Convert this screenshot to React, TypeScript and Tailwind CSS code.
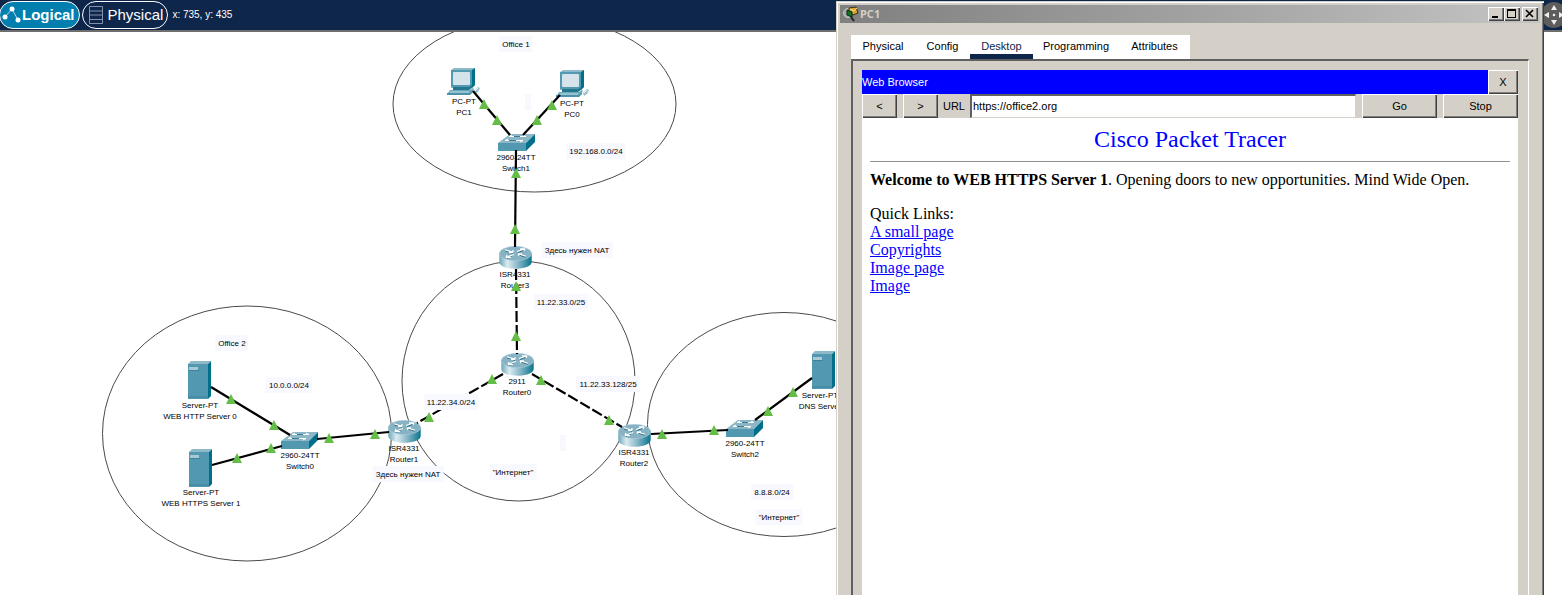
import React from "react";

type Point = { x: number; y: number };
type DeviceKind = "pc" | "switch" | "router" | "server";
type Device = Point & { kind: DeviceKind; model: string; name: string; labelX: number; labelY: number };
type Note = Point & { text: string };
type Cable = { from: Point; to: Point; dashed?: boolean };

/** Workspace coordinates start at the top of the page, above the toolbar. */
const TOOLBAR_HEIGHT = 32;

const areas = [
  { cx: 534.5, cy: 104, rx: 141.5, ry: 88 },
  { cx: 247, cy: 433.5, rx: 144.5, ry: 127.5 },
  { cx: 518.5, cy: 381, rx: 116.5, ry: 120 },
  { cx: 784, cy: 424.5, rx: 136.5, ry: 112 },
];

const devices: Device[] = [
  { kind: "pc", x: 447, y: 68, model: "PC-PT", name: "PC1", labelX: 464, labelY: 96 },
  { kind: "pc", x: 556, y: 70, model: "PC-PT", name: "PC0", labelX: 572, labelY: 98 },
  { kind: "switch", x: 498, y: 134, model: "2960-24TT", name: "Switch1", labelX: 516, labelY: 152 },
  { kind: "router", x: 499, y: 246, model: "ISR4331", name: "Router3", labelX: 515, labelY: 269 },
  { kind: "router", x: 501, y: 353, model: "2911", name: "Router0", labelX: 517, labelY: 376 },
  { kind: "router", x: 388, y: 420, model: "ISR4331", name: "Router1", labelX: 404, labelY: 443 },
  { kind: "router", x: 618, y: 424, model: "ISR4331", name: "Router2", labelX: 634, labelY: 447 },
  { kind: "switch", x: 281, y: 432, model: "2960-24TT", name: "Switch0", labelX: 300, labelY: 450 },
  { kind: "server", x: 188, y: 361, model: "Server-PT", name: "WEB HTTP Server 0", labelX: 200, labelY: 400 },
  { kind: "server", x: 189, y: 449, model: "Server-PT", name: "WEB HTTPS Server 1", labelX: 201, labelY: 487 },
  { kind: "switch", x: 726, y: 420, model: "2960-24TT", name: "Switch2", labelX: 745, labelY: 438 },
  { kind: "server", x: 812, y: 351, model: "Server-PT", name: "DNS Server", labelX: 820, labelY: 390 },
];

const cables: Cable[] = [
  { from: { x: 473, y: 91 }, to: { x: 510, y: 135 } },
  { from: { x: 560, y: 95 }, to: { x: 523, y: 135 } },
  { from: { x: 516, y: 150 }, to: { x: 515, y: 247 } },
  { from: { x: 516, y: 269 }, to: { x: 517, y: 354 }, dashed: true },
  { from: { x: 503, y: 374 }, to: { x: 417, y: 423 }, dashed: true },
  { from: { x: 532, y: 374 }, to: { x: 622, y: 427 }, dashed: true },
  { from: { x: 211, y: 387 }, to: { x: 290, y: 435 } },
  { from: { x: 212, y: 465 }, to: { x: 282, y: 446 } },
  { from: { x: 317, y: 439 }, to: { x: 389, y: 432 } },
  { from: { x: 651, y: 434 }, to: { x: 728, y: 430 } },
  { from: { x: 755, y: 420 }, to: { x: 812, y: 378 } },
];

const linkLights: Point[] = [
  { x: 484, y: 104 }, { x: 497, y: 120 }, { x: 552, y: 105 }, { x: 537, y: 120 },
  { x: 516, y: 173 }, { x: 515, y: 229 }, { x: 516, y: 286 }, { x: 516, y: 336 },
  { x: 492, y: 379 }, { x: 541, y: 380 }, { x: 429, y: 417 }, { x: 609, y: 420 },
  { x: 375, y: 434 }, { x: 662, y: 434 }, { x: 231, y: 399 }, { x: 274, y: 425 },
  { x: 237, y: 458 }, { x: 271, y: 448 }, { x: 329, y: 438 }, { x: 714, y: 430 },
  { x: 768, y: 411 }, { x: 793, y: 392 },
];

const notes: Note[] = [
  { text: "Office 1", x: 516, y: 44 },
  { text: "", x: 528, y: 102 },
  { text: "192.168.0.0/24", x: 596, y: 151 },
  { text: "Здесь нужен NAT", x: 577, y: 250 },
  { text: "11.22.33.0/25", x: 561, y: 302 },
  { text: "11.22.33.128/25", x: 608, y: 384 },
  { text: "11.22.34.0/24", x: 451, y: 402 },
  { text: "10.0.0.0/24", x: 289, y: 385 },
  { text: "Office 2", x: 232, y: 343 },
  { text: "Здесь нужен NAT", x: 408, y: 474 },
  { text: "\"Интернет\"", x: 513, y: 472 },
  { text: "", x: 563, y: 443 },
  { text: "8.8.8.0/24", x: 772, y: 492 },
  { text: "\"Интернет\"", x: 779, y: 517 },
];

function PcIcon() {
  return (
    <g>
      <path d="M4 2 L7 0 H28 V17 L25 20 H4Z" fill="#8db9c9" />
      <path d="M25 2 L28 0 V17 L25 20Z" fill="#00708a" />
      <rect x="4" y="2" width="21" height="17" fill="#529ab1" />
      <rect x="6" y="4" width="17" height="13" rx="1" fill="#d5e4ea" />
      <path d="M6 19 H22 L25 17 V20 L22 22 H6Z" fill="#22768e" />
      <path d="M3 22 H23 L26 20 L27 21 L24 25 H1Z" fill="#6aa9bd" />
      <path d="M0 25 H23 L26 22 V24 L23 27 H0Z" fill="#4a91a9" />
      <path d="M3 24 H22" stroke="#c3dbe3" strokeWidth="1" />
      <path d="M27 23 L31 19 L33 20 L31 24 L28 26Z" fill="#9bbfcb" />
      <path d="M28 23 L31 20" stroke="#e8f2f5" strokeWidth="1" />
    </g>
  );
}

function SwitchIcon() {
  return (
    <g>
      <path d="M0 9 L12 0 H37 L28 9Z" fill="#8db7c7" />
      <path d="M0 9 H28 V17 H0Z" fill="#5298b0" />
      <path d="M28 9 L37 0 V8 L28 17Z" fill="#00708a" />
      <g fill="none" strokeWidth="1">
        <path d="M16 2.500 H22 M10 6.500 H18" stroke="#3b7d94" />
        <path d="M11 2.500 H16 M11 2.500 L14 1 M22 2.500 H28 M25 1 L28 2.500 M7 6.500 H11 M7 6.500 L10 5 M18 6.500 H25 M22 8 L25 6.500" stroke="#fff" />
      </g>
    </g>
  );
}

function RouterIcon() {
  return (
    <g>
      <path d="M.3 7 V16 C.3 25 32.7 25 32.7 16 V7Z" fill="url(#router-side)" />
      <ellipse cx="16.500" cy="7.500" rx="16.200" ry="7.200" fill="#86b2c4" stroke="#b4d2dc" strokeWidth=".5" />
      <g fill="none" stroke="#286a80" strokeWidth="1">
        <path d="M6 4.800 L14 7.300 M27 11.200 L19 8.700 M19 6.500 L26 3.800 M14 9.300 L8 12.300" />
      </g>
      <g fill="none" stroke="#fff" strokeWidth="1.200">
        <path d="M6 3.800 L14 6.300 M14 6.300 V4 M14 6.300 H10" />
        <path d="M27 10.200 L19 7.800 M19 7.800 H23 M19 7.800 L20 10" />
        <path d="M18 5.500 L26 2.800 M26 2.800 H21 M26 2.800 L25 5" />
        <path d="M15 8.500 L7 11.500 M7 11.500 L8 9 M7 11.500 H12" />
      </g>
    </g>
  );
}

function ServerIcon() {
  return (
    <g>
      <path d="M0 3 L3 0 H23 L20 3Z" fill="#8db9c9" />
      <path d="M0 3 H20 V38 H0Z" fill="#5298b0" />
      <path d="M20 3 L23 0 V35 L20 38Z" fill="#00708a" />
      <rect x="1" y="6" width="9" height="3" fill="#a9cad5" />
      <path d="M1 9.500 H11 M0 36 H20" stroke="#38849d" strokeWidth="1" />
    </g>
  );
}

const icons: Record<DeviceKind, () => React.JSX.Element> = {
  pc: PcIcon,
  switch: SwitchIcon,
  router: RouterIcon,
  server: ServerIcon,
};

function Workspace() {
  return (
    <main className="relative flex-1 overflow-hidden bg-white text-[8px] leading-[11px] text-black">
      <svg className="absolute inset-0 h-full w-full" aria-hidden="true">
        <g transform={`translate(0 ${-TOOLBAR_HEIGHT})`} fill="none" stroke="#4a4a4a" strokeWidth="1">
          {areas.map((area) => (
            <ellipse key={area.cx} {...area} />
          ))}
        </g>
      </svg>
      {devices.map((device) => (
        <div
          key={device.name}
          className="absolute -translate-x-1/2 text-center whitespace-nowrap"
          style={{ left: device.labelX, top: device.labelY - TOOLBAR_HEIGHT }}
        >
          <p>{device.model}</p>
          <p>{device.name}</p>
        </div>
      ))}
      <svg className="absolute inset-0 h-full w-full" aria-hidden="true">
        <defs>
          <linearGradient id="router-side">
            <stop offset="0" stopColor="#6aa6b9" />
            <stop offset=".25" stopColor="#dcebf0" />
            <stop offset=".55" stopColor="#8fbccb" />
            <stop offset="1" stopColor="#0a748d" />
          </linearGradient>
        </defs>
        <g transform={`translate(0 ${-TOOLBAR_HEIGHT})`}>
          {devices.map((device) => {
            const Icon = icons[device.kind];
            return (
              <g key={device.name} transform={`translate(${device.x} ${device.y})`}>
                <Icon />
              </g>
            );
          })}
          {cables.map(({ from, to, dashed }) => (
            <line
              key={`${from.x}-${to.x}`}
              x1={from.x}
              y1={from.y}
              x2={to.x}
              y2={to.y}
              stroke="#000"
              strokeWidth="2.200"
              strokeDasharray={dashed ? "11 3" : undefined}
            />
          ))}
        </g>
      </svg>
      {notes.map((note) => (
        <p
          key={`${note.x}-${note.y}`}
          className="absolute flex h-4 -translate-x-1/2 -translate-y-1/2 items-center bg-[#f8f8ff] px-[3px] whitespace-nowrap"
          style={{ left: note.x, top: note.y - TOOLBAR_HEIGHT }}
        >
          {note.text}
        </p>
      ))}
      <svg className="absolute inset-0 h-full w-full" aria-hidden="true">
        <g transform={`translate(0 ${-TOOLBAR_HEIGHT})`} fill="#64bd46">
          {linkLights.map(({ x, y }) => (
            <path key={`${x}-${y}`} d={`M${x} ${y - 5} L${x + 5} ${y + 5} H${x - 5}Z`} />
          ))}
        </g>
      </svg>
    </main>
  );
}

function Toolbar() {
  return (
    <header className="flex h-8 items-start overflow-hidden border-b-2 border-[#6e6e6e] bg-[#0f264b] text-white">
      <button className="-ml-px mt-px flex h-7 shrink-0 items-center gap-px rounded-full border border-white bg-[#027fae] pr-1 pl-[2px] text-[15px] font-bold">
        <svg width="19" height="20" viewBox="0 0 19 20" aria-hidden="true">
          <path d="M3 12 L10 4 L16 15" fill="none" stroke="#b5dbe9" strokeWidth="1" />
          <circle cx="3" cy="12" r="2.500" fill="#fff" />
          <circle cx="10" cy="4" r="2.500" fill="#fff" />
          <circle cx="16" cy="15" r="2.500" fill="#fff" />
        </svg>
        Logical
      </button>
      <button className="mt-px ml-[2px] flex h-7 shrink-0 items-center gap-1 rounded-full border border-white pr-1 pl-[5px] text-[15px]">
        <svg width="16" height="20" viewBox="0 0 16 20" aria-hidden="true">
          <path d="M1.500 1.500 H14.500 V18.500 H1.500Z M1.500 6 H14.500 M1.500 10 H14.500 M1.500 14.500 H14.500" fill="none" stroke="#8391ab" strokeWidth="1" />
        </svg>
        Physical
      </button>
      <p className="ml-1 text-[10px] leading-[30px] whitespace-nowrap">x: 735, y: 435</p>
      <button className="-mr-[5px] ml-auto mt-[2px] shrink-0" aria-label="Pan workspace">
        <svg width="26" height="26" viewBox="0 0 26 26" aria-hidden="true">
          <circle cx="13" cy="13" r="13" fill="#5d5d5d" />
          <path d="M13 3 L16 8 H10Z M13 23 L16 18 H10Z M3 13 L8 10 V16Z M23 13 L18 10 V16Z" fill="#eee" />
          <circle cx="13" cy="13" r="1.300" fill="#eee" />
        </svg>
      </button>
    </header>
  );
}

const raised =
  "bg-[#d4d0c8] shadow-[inset_1px_1px_#fff,inset_-1px_-1px_#404040,inset_-2px_-2px_#808080]";

const tabs = ["Physical", "Config", "Desktop", "Programming", "Attributes"];
const links = ["A small page", "Copyrights", "Image page", "Image"];

function TitleBar() {
  return (
    <div className="flex h-[18px] shrink-0 items-center bg-linear-to-r from-[#808080] to-[#c4c4c4] pr-[2px] pl-[3px]">
      <svg width="16" height="16" viewBox="0 0 16 16" aria-hidden="true">
        <circle cx="5" cy="7" r="4.500" fill="#a5aaa6" stroke="#c5c9c6" strokeWidth="1" />
        <path d="M8 11 L11 15" stroke="#222" strokeWidth="2" />
        <path d="M6 2 L13 1 L15 7 L10 9 L6 6Z" fill="#d9a634" stroke="#3b2d0c" strokeWidth="1" />
        <path d="M7 3 L11 5 L14 2" fill="none" stroke="#f7dc83" strokeWidth="1" />
        <path d="M4 4 L9 6 V11 L4 9Z" fill="#137026" stroke="#052d0d" strokeWidth="1" />
      </svg>
      <h1 className="ml-px pb-[2px] text-[11px] leading-none font-bold text-[#d4d0c8] [font-family:'Noto_Sans',sans-serif]">PC1</h1>
      <div className="ml-auto flex">
        <button className={`h-[14px] w-4 ${raised}`} aria-label="Minimize">
          <svg width="16" height="14" aria-hidden="true"><path d="M4 9 H10 V11 H4Z" /></svg>
        </button>
        <button className={`h-[14px] w-4 ${raised}`} aria-label="Maximize">
          <svg width="16" height="14" aria-hidden="true"><path d="M3 2 H12 V11 H3Z M4 4 V10 H11 V4Z" fillRule="evenodd" /></svg>
        </button>
        <button className={`ml-[2px] h-[14px] w-4 ${raised}`} aria-label="Close">
          <svg width="16" height="14" aria-hidden="true"><path d="M4 3 L11 10 M11 3 L4 10" stroke="#000" strokeWidth="1.600" /></svg>
        </button>
      </div>
    </div>
  );
}

function WebBrowser() {
  return (
    <section className="flex flex-1 flex-col bg-white">
      <div className="flex h-6 shrink-0 bg-[#00f]">
        <h2 className="flex-1 leading-6 text-white">Web Browser</h2>
        <button className={`w-[30px] ${raised}`} aria-label="Close browser">X</button>
      </div>
      <div className="flex h-6 shrink-0 bg-[#d4d0c8]">
        <button className={`w-[35px] shrink-0 ${raised}`} aria-label="Back">&lt;</button>
        <button className={`ml-[6px] w-[35px] shrink-0 ${raised}`} aria-label="Forward">&gt;</button>
        <label htmlFor="url" className="w-8 shrink-0 text-center leading-6">URL</label>
        <input
          id="url"
          type="text"
          defaultValue="https://office2.org"
          className="min-w-0 flex-1 border-t-2 border-r border-b border-l-2 border-t-[#606060] border-r-[#d4d0c8] border-b-[#d4d0c8] border-l-[#606060] bg-white px-px outline-none"
        />
        <button className={`ml-[6px] w-[75px] shrink-0 ${raised}`}>Go</button>
        <button className={`ml-[6px] w-[75px] shrink-0 ${raised}`}>Stop</button>
      </div>
      <article className="p-2 text-[16px] leading-[18px] [font-family:'Liberation_Serif',serif]">
        <h3 className="text-center text-[24px] leading-[27px] text-[#00f]">Cisco Packet Tracer</h3>
        <hr className="mt-2 mb-[9px] border-[#909090]" />
        <p>
          <b>Welcome to WEB HTTPS Server 1</b>. Opening doors to new opportunities. Mind Wide Open.
        </p>
        <p className="mt-4">Quick Links:</p>
        <ul>
          {links.map((link) => (
            <li key={link}>
              <a href="#" className="text-[#00f] underline">{link}</a>
            </li>
          ))}
        </ul>
      </article>
    </section>
  );
}

function DeviceWindow() {
  return (
    <div className="absolute top-px right-[18px] bottom-0 left-[836px] flex flex-col bg-[#d4d0c8] px-1 pt-1 text-[11px] text-black shadow-[inset_1px_1px_#d4d0c8,inset_2px_2px_#fff,inset_-1px_0_#404040,inset_-2px_0_#808080]">
      <TitleBar />
      <div className="mx-[11px] mt-3 flex flex-1 flex-col">
        <nav className="grid h-6 w-fit shrink-0 grid-cols-[64px_55px_63px_86px_71px] bg-white leading-[15px]">
          {tabs.map((tab) => (
            <button
              key={tab}
              className={
                tab === "Desktop"
                  ? "border-b-5 border-[#0f264b] pt-1 text-[#0f264b]"
                  : "border-b-5 border-transparent pt-1"
              }
            >
              {tab}
            </button>
          ))}
        </nav>
        <div className="flex flex-1 flex-col border-t-2 border-r border-l-2 border-t-[#606060] border-r-white border-l-[#606060] pt-[9px] pr-[10px] pl-[9px]">
          <WebBrowser />
        </div>
      </div>
    </div>
  );
}

export default function App() {
  return (
    <div className="relative flex min-h-screen flex-col overflow-hidden bg-white [font-family:'Liberation_Sans',Arial,sans-serif]">
      <Toolbar />
      <Workspace />
      <DeviceWindow />
    </div>
  );
}
